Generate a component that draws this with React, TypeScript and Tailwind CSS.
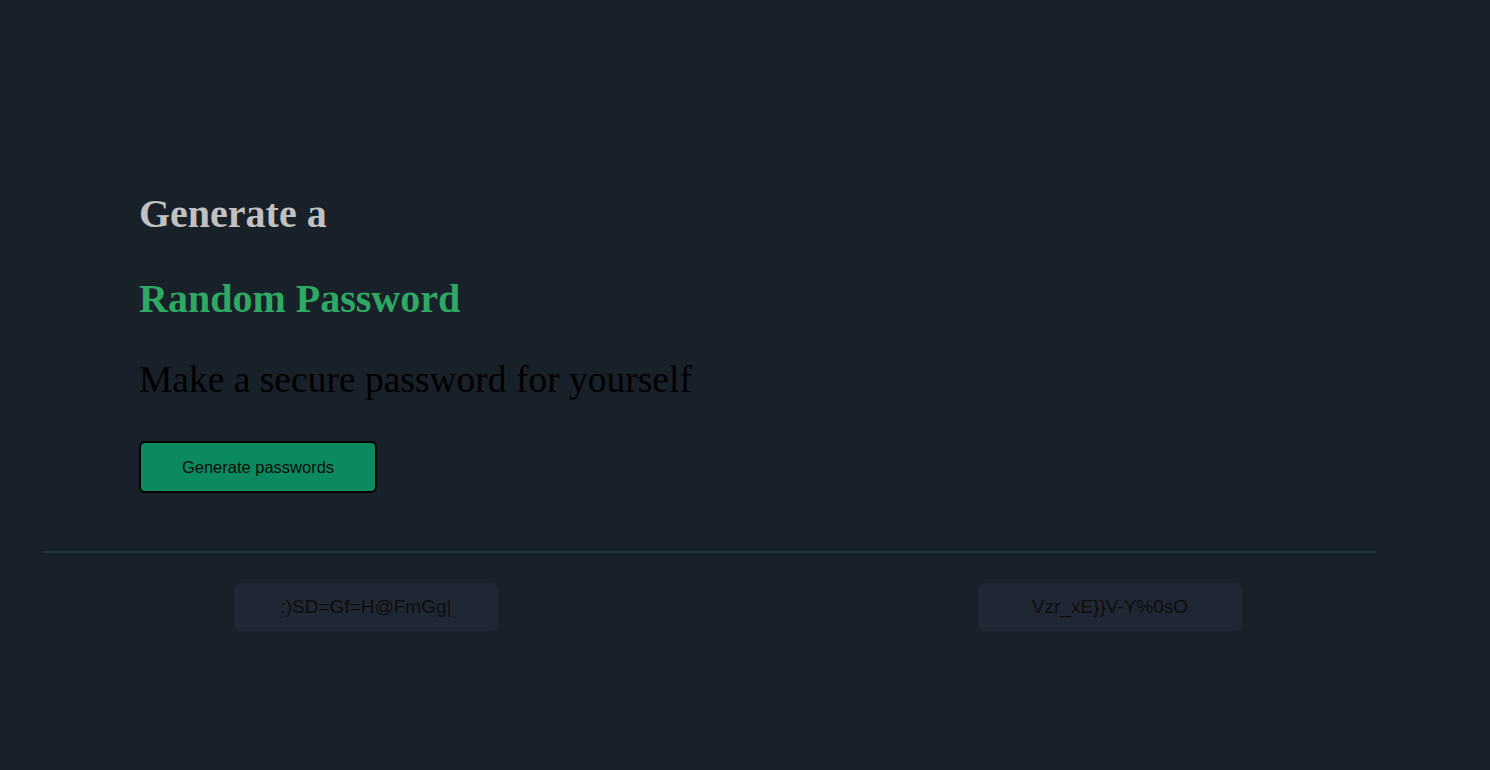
const passwords = [":)SD=Gf=H@FmGg|", "Vzr_xE}}V-Y%0sO"];

export default function App() {
  return (
    <div className="min-h-screen w-full bg-[#18202a] pt-[171px] font-['Liberation_Serif',serif]">
      <section className="pl-[139px]">
        <h1 className="text-[40px] font-bold leading-[85px] text-[#c1c1c1]">Generate a</h1>
        <h1 className="text-[40px] font-bold leading-[85px] text-[#2ea862]">Random Password</h1>
        <p className="mt-[-1px] text-[37.5px] leading-[80px] text-black">Make a secure password for yourself</p>
        <button
          type="button"
          className="mt-[21px] h-[52px] w-[238px] rounded-[6px] border-2 border-black bg-[#0b8a5f] font-['Liberation_Sans',sans-serif] text-[16.5px] text-[#0a0a0a]"
        >
          Generate passwords
        </button>
      </section>

      <div className="ml-[44px] mt-[58px] h-[2px] w-[1332px] bg-[#243440]" />

      <div className="mt-[30px] flex gap-[480px] pl-[234px]">
        {passwords.map(pw => (
          <div
            key={pw}
            className="flex h-[48px] w-[264px] items-center justify-center rounded-[6px] bg-[#1f2734] font-['Liberation_Sans',sans-serif] text-[19px] text-[#0d0d0d]"
          >
            {pw}
          </div>
        ))}
      </div>
    </div>
  );
}
